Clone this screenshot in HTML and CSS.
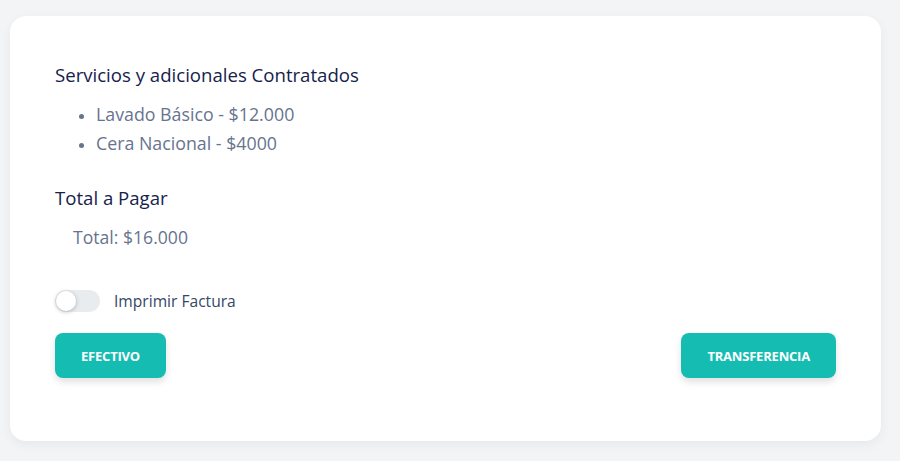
FILE: index.html
```html
<!DOCTYPE html>
<html lang="es">
<head>
    <meta charset="UTF-8">
    <meta name="viewport" content="width=device-width, initial-scale=1.0">
    <title>Resumen de Pago</title>
    <link rel="stylesheet" href="styles.css">
</head>
<body>
    <div class="card">
        <h2>Servicios y adicionales Contratados</h2>
        <ul class="services">
            <li>Lavado Básico - $12.000</li>
            <li>Cera Nacional - $4000</li>
        </ul>

        <h2 class="total-title">Total a Pagar</h2>
        <p class="total">Total: $16.000</p>

        <label class="switch">
            <input type="checkbox" id="printInvoice">
            <span class="track"><span class="knob"></span></span>
            <span class="switch-label">Imprimir Factura</span>
        </label>

        <div class="actions">
            <button type="button" class="btn">Efectivo</button>
            <button type="button" class="btn">Transferencia</button>
        </div>
    </div>
</body>
</html>
```

FILE: styles.css
```css
/* Styles généraux */
body {
    font-family: "Open Sans", "Noto Sans", sans-serif;
    background-color: #f3f4f6;
    margin: 0;
    padding: 16px 19px 20px 10px;
}

.card {
    background-color: white;
    border-radius: 16px;
    box-shadow: 0 4px 12px rgba(0, 0, 0, 0.05);
    padding: 46px 45px 46px 45px;
    height: 425px;
    box-sizing: border-box;
}

h2 {
    font-size: 18.6px;
    font-weight: 500;
    color: #15224c;
    margin: 0;
    line-height: 26px;
}

.services {
    margin: 12px 0 0 0;
    padding-left: 41px;
    color: #67748e;
    font-size: 17.8px;
    line-height: 29px;
}

.services li::marker {
    font-size: 15px;
}

.total-title {
    margin-top: 27px;
}

.total {
    margin: 14px 0 0 18px;
    color: #67748e;
    font-size: 17.6px;
    line-height: 24px;
}

.switch {
    display: flex;
    align-items: center;
    margin-top: 41px;
    cursor: pointer;
}

.switch input {
    display: none;
}

.track {
    width: 45px;
    height: 22px;
    border-radius: 11px;
    background-color: #e9ecef;
    position: relative;
    flex-shrink: 0;
}

.knob {
    position: absolute;
    left: 1px;
    top: 1px;
    width: 20px;
    height: 20px;
    border-radius: 50%;
    background-color: white;
    box-shadow: 0 1px 4px rgba(0, 0, 0, 0.25);
}

.switch-label {
    margin-left: 14px;
    font-size: 15.6px;
    color: #344767;
}

.actions {
    display: flex;
    justify-content: space-between;
    margin-top: 21px;
}

.btn {
    height: 45px;
    padding: 0 26px;
    background-color: #15bcb2;
    color: white;
    border: none;
    border-radius: 8px;
    font-family: inherit;
    font-size: 13px;
    font-weight: 700;
    text-transform: uppercase;
    letter-spacing: -0.2px;
    box-shadow: 0 4px 7px rgba(0, 0, 0, 0.12);
    cursor: pointer;
}

.btn:hover {
    background-color: #17c9bd;
}
```
